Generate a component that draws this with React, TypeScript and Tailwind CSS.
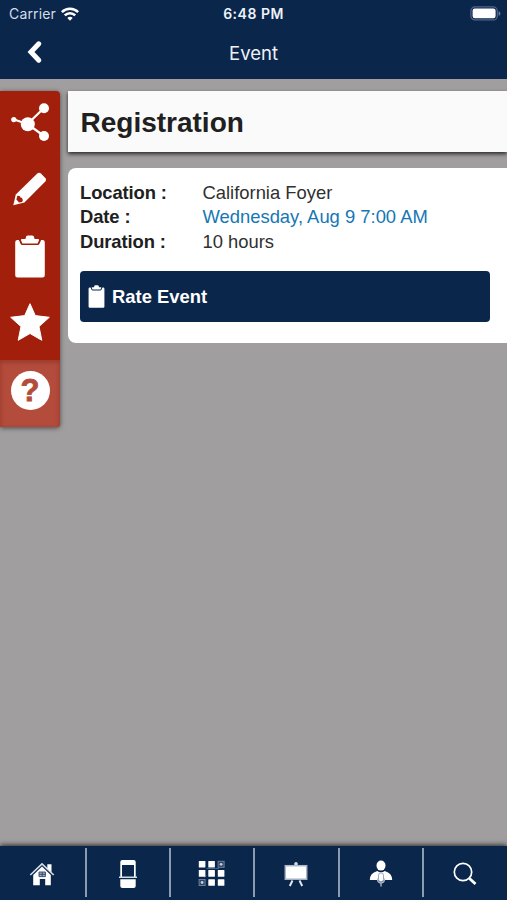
import type { ReactNode } from "react";

function WifiIcon() {
  return (
    <svg className="w-[18px] h-[14px]" viewBox="0 0 18 14" fill="none" stroke="white" strokeWidth="2.6">
      <path d="M0.9 5.1a11.6 11.6 0 0 1 16.2 0" />
      <path d="M3.8 8.4a7.4 7.4 0 0 1 10.4 0" />
      <path d="M9 13.8 6.3 11a3.8 3.8 0 0 1 5.4 0z" fill="white" stroke="none" />
    </svg>
  );
}

function BatteryIcon() {
  return (
    <svg className="w-[31px] h-[15px]" viewBox="0 0 31 15">
      <rect x="0.9" y="0.9" width="26.4" height="13" rx="4" fill="none" stroke="#52678a" strokeWidth="1.2" />
      <rect x="2.6" y="2.6" width="23" height="9.6" rx="2.2" fill="white" />
      <path d="M28.6 5.2c2.4 1 2.4 3.6 0 4.6z" fill="#6f819e" />
    </svg>
  );
}

function ShareIcon() {
  return (
    <svg className="w-[60px] h-[67px]" viewBox="0 0 60 67" fill="white" stroke="white">
      <path d="M14 28.5 27.5 33 44 17M27.5 33 44 45" fill="none" strokeWidth="2.2" />
      <g stroke="none">
        <circle cx="27.8" cy="33.2" r="7" />
        <circle cx="44" cy="17.3" r="5" />
        <circle cx="44" cy="45" r="5" />
        <circle cx="13.8" cy="28.6" r="2.6" />
      </g>
    </svg>
  );
}

function PencilIcon() {
  return (
    <svg className="w-[60px] h-[67px]" viewBox="0 0 60 67" fill="white">
      <path d="M13.3 47.3 15.8 36.6 37.3 15.6q1.8-1.500 3.600 0l4.600 4.600q1.300 1.700-.2 3.400L24.400 44.600z" />
      <path d="M17.200 38.200c1.400-.9 3 0 3.300 1.300 1.500.1 2.400 1.300 2.200 2.900l-.5 1.700-3.200.3-2.600-2.800z" fill="#a21f0b" />
    </svg>
  );
}

function ClipboardShape({ className }: { className: string }) {
  return (
    <svg className={className} viewBox="0 0 30 43" fill="white">
      <path d="M2.500 4.900h1.400l1.500 3.700q.6 1.500 2.200 1.500h14.800q1.600 0 2.200-1.500l1.500-3.700h1.400q2.300 0 2.300 2.300v33q0 2.300-2.300 2.300h-25Q.2 42.500.2 40.200v-33Q.2 4.900 2.500 4.900z" />
      <path d="M7.400 8.400 6 5.300q-.3-1.100 1-1.200h2.700q.9 0 1-1.200.2-2.400 2.200-2.400h4.200q2 0 2.200 2.400.1 1.200 1 1.200H23q1.300.1 1 1.200l-1.400 3.100z" />
    </svg>
  );
}

function StarIcon() {
  return (
    <svg className="w-[60px] h-[67px]" viewBox="0 0 60 67" fill="white" stroke="white" strokeWidth="1" strokeLinejoin="round">
      <path d="M30 10.700 35.300 22.600 49.300 24.300 39 33.600 41.800 47.300 30 40.500 18.200 47.300 21 33.600 10.700 24.300 24.700 22.600z" />
    </svg>
  );
}

function HomeIcon() {
  return (
    <svg className="w-[26px] h-[26px]" viewBox="0 0 26 26" fill="white">
      <path d="M1.300 14 13 2.800 24.700 14" fill="none" stroke="#d5dce6" strokeWidth="1.600" />
      <path d="M18.300 3.300h4.200v8l-4.200-4z" />
      <path d="M4.200 14 13 5.500l8.800 8.500v10.200h-5.600V18h-5.400v6.200H4.200z" />
      <path d="M10 11h6.400v4.600H10zM13.200 11v4.600M10 13.300h6.400" fill="#a3afc1" stroke="#2b456c" strokeWidth=".9" />
    </svg>
  );
}

function KioskIcon() {
  return (
    <svg className="w-[20px] h-[30px]" viewBox="0 0 20 30" fill="white">
      <path d="M2.300 18V3q0-2 2-2h11.400q2 0 2 2v15h-1.700V6H4v12z" />
      <path d="M1 17.500h18V19H1z" fill="#d5dce6" />
      <path d="M2.300 20.300h15.400V27q0 2-2 2H4.300q-2 0-2-2z" />
    </svg>
  );
}

const cells = [0, 1, 2, 3, 4, 5, 6, 7, 8];

function GridIcon() {
  return (
    <svg className="w-[27px] h-[27px]" viewBox="0 0 27 27">
      <path d="M6.500 17.500l2-2M17.500 8.500h3.500M8.500 8.500h9" stroke="#4d6384" />
      {cells.map((cell) => {
        const x = 0.8 + (cell % 3) * 9.5;
        const y = 1 + Math.floor(cell / 3) * 9.1;
        if (cell === 2 || cell === 6) {
          return (
            <g key={cell}>
              <rect x={x + 0.3} y={y + 0.3} width="6" height="6" fill="#2d456a" stroke="#6f809b" />
              <circle cx={x + 3.3} cy={y + 3.3} r="1.400" fill="#c8d0dc" />
            </g>
          );
        }
        return <rect key={cell} x={x} y={y} width="6.600" height="6.600" rx=".5" fill="white" />;
      })}
    </svg>
  );
}

function BoardIcon() {
  return (
    <svg className="w-[24px] h-[26px]" viewBox="0 0 24 26">
      <path d="M10.300 4V2.500q0-1.500 1.700-1.500t1.700 1.500V4z" fill="#d5dce6" />
      <rect x="1.300" y="4.700" width="21.400" height="13.500" fill="white" stroke="#abb6c7" strokeWidth="1.500" />
      <path d="M8.500 19.500 5.800 25M15.500 19.500l2.700 5.500" stroke="#e4e9ef" strokeWidth="2" />
    </svg>
  );
}

function SpeakerIcon() {
  return (
    <svg className="w-[24px] h-[27px]" viewBox="0 0 24 27" fill="white">
      <ellipse cx="12" cy="5.600" rx="4.500" ry="5" />
      <path d="M.8 20q0-6.800 7.400-9Q12 13.500 15.800 11 23.200 13.200 23.200 20z" />
      <rect x="9.500" y="12.800" width="5" height="9" rx="2.500" stroke="#8291a8" strokeWidth=".8" />
      <path d="M8.500 18.500q0 4.500 3.500 4.500t3.500-4.500M12 23v3.500" fill="none" stroke="#b3becd" strokeWidth="1.300" />
    </svg>
  );
}

function SearchIcon() {
  return (
    <svg className="w-[24px] h-[24px]" viewBox="0 0 24 24" fill="none" stroke="white">
      <circle cx="10" cy="10" r="8.700" strokeWidth="1.700" />
      <path d="m16.500 16.500 6 5.600" strokeWidth="2.800" />
    </svg>
  );
}

const details = [
  { label: "Location :", value: "California Foyer", color: "text-[#303030]" },
  { label: "Date :", value: "Wednesday, Aug 9 7:00 AM", color: "text-[#1577b5]" },
  { label: "Duration :", value: "10 hours", color: "text-[#303030]" },
];

const tabs: { name: string; icon: ReactNode }[] = [
  { name: "Home", icon: <HomeIcon /> },
  { name: "Kiosk", icon: <KioskIcon /> },
  { name: "Map", icon: <GridIcon /> },
  { name: "Sessions", icon: <BoardIcon /> },
  { name: "Speakers", icon: <SpeakerIcon /> },
  { name: "Search", icon: <SearchIcon /> },
];

export default function App() {
  return (
    <div className="w-full h-[900px] flex flex-col overflow-hidden bg-[#a09e9e] font-['Liberation_Sans',Arial,sans-serif]">
      <header className="h-[79px] shrink-0 bg-[#0a264b] text-[#eef2f8]">
        <div className="h-[27px] grid grid-cols-3 items-center px-[9px] font-['Inter',sans-serif] text-[14px] leading-none">
          <div className="flex items-center gap-[5px] text-[#d5dde8]">
            <span className="pt-px tracking-[0.15px]">Carrier</span>
            <WifiIcon />
          </div>
          <span className="pt-px text-center font-semibold text-[14px] tracking-[0.5px]">6:48 PM</span>
          <div className="flex justify-end -mr-[3px]">
            <BatteryIcon />
          </div>
        </div>
        <div className="h-[52px] grid grid-cols-[60px_1fr_60px] items-center">
          <button className="pl-[27px] pb-[3px]" aria-label="Back">
            <svg className="w-[16px] h-[24px]" viewBox="0 0 16 24" fill="none" stroke="white" strokeWidth="5">
              <path d="M11.800 3.800 4 12l7.800 8.200" strokeLinecap="round" />
            </svg>
          </button>
          <h1 className="text-center font-['Inter',sans-serif] text-[18.5px] leading-none">Event</h1>
        </div>
      </header>

      <div className="flex-1 flex items-start gap-2 pt-3">
        <aside className="w-[60px] h-[336px] shrink-0 flex flex-col rounded-r-[4px] overflow-hidden bg-[#a21f0b] shadow-[0_1px_5px_rgba(0,0,0,0.55)]">
          <button className="h-[67px]" aria-label="Share"><ShareIcon /></button>
          <button className="h-[67px]" aria-label="Notes"><PencilIcon /></button>
          <button className="h-[67px] flex justify-center pt-[10px]" aria-label="Survey">
            <ClipboardShape className="w-[30px] h-[43px]" />
          </button>
          <button className="h-[68px]" aria-label="Favorite"><StarIcon /></button>
          <button className="h-[67px] flex items-start justify-center pt-[11px] bg-[#b44c3c] shadow-[inset_0_2px_5px_rgba(90,20,10,0.35)]">
            <span className="size-[39px] rounded-full bg-white flex items-center justify-center text-[#b44c3c] text-[31px] font-bold leading-none [-webkit-text-stroke:0.8px_#b44c3c]">
              ?
            </span>
          </button>
        </aside>

        <main className="flex-1">
          <h2 className="h-[61px] flex items-center pl-[12.5px] pt-[2px] bg-[#fafafa] text-[#202020] text-[28px] font-bold leading-none shadow-[0_2px_4px_rgba(0,0,0,0.75)]">
            Registration
          </h2>
          <section className="mt-4 h-[175px] rounded-l-[8px] bg-white pl-3 pr-[17px] pt-[13px]">
            <dl className="text-[18.4px] leading-[24.4px]">
              {details.map((row) => (
                <div key={row.label} className="flex">
                  <dt className="w-[122.5px] font-bold text-[#202020] tracking-[-0.1px]">{row.label}</dt>
                  <dd className={row.color}>{row.value}</dd>
                </div>
              ))}
            </dl>
            <button className="mt-[16.3px] w-full h-[51px] flex items-center gap-[7px] pl-2 rounded-[4px] bg-[#0a264b] text-white text-[18.4px] font-bold">
              <ClipboardShape className="w-[17px] h-[23px]" />
              <span className="pt-px">Rate Event</span>
            </button>
          </section>
        </main>
      </div>

      <nav className="h-[54px] shrink-0 grid grid-cols-[87px_84px_84px_85px_84px_83px] bg-[#0a264b] shadow-[0_-1px_5px_rgba(0,0,0,0.75)]">
        {tabs.map((tab) => (
          <button
            key={tab.name}
            aria-label={tab.name}
            className="mt-[2px] mb-[3px] pt-[2px] pr-px flex items-center justify-center border-r-2 border-[#8b9bb0] last:border-r-0"
          >
            {tab.icon}
          </button>
        ))}
      </nav>
    </div>
  );
}
